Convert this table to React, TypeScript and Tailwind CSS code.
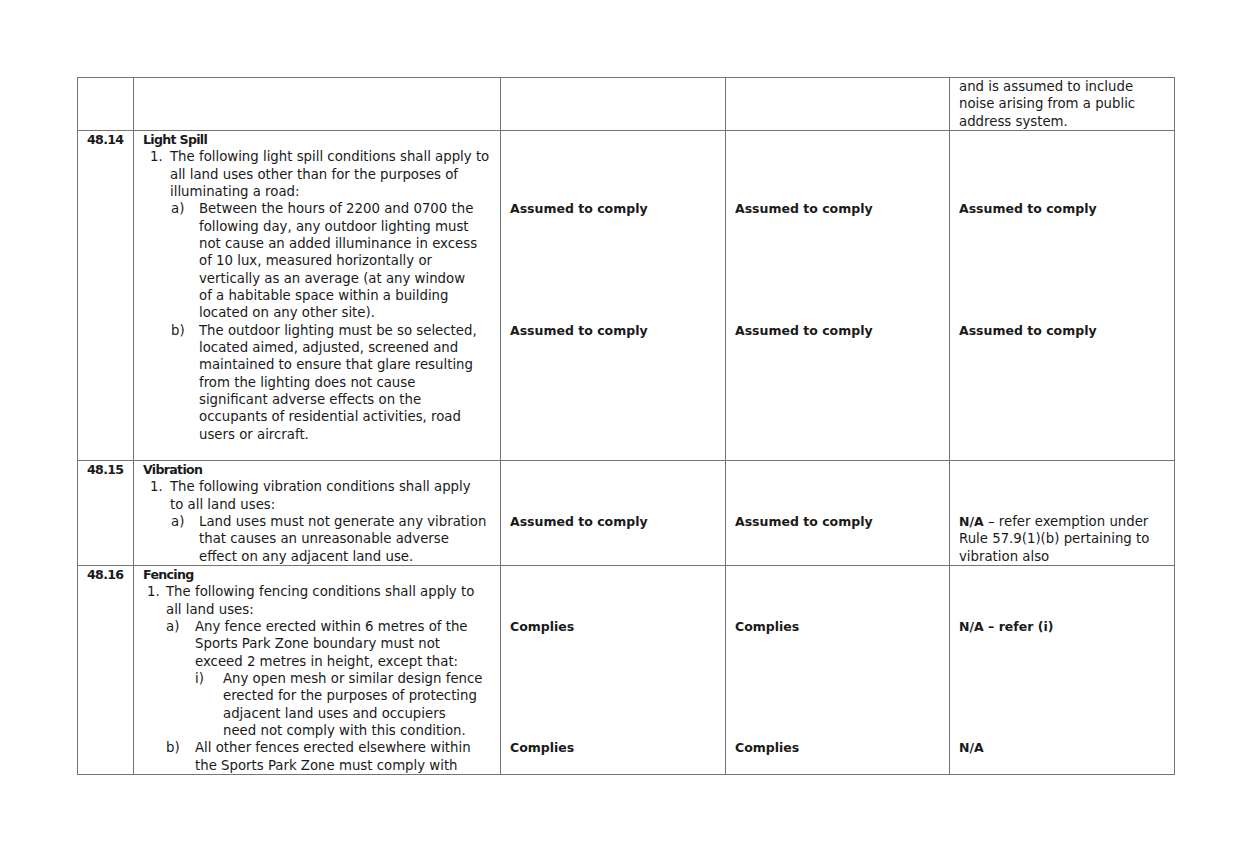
import React from "react";

type Kind = "r" | "b" | "h";
type Line = { ind?: string; mk?: string; mw?: string; text: React.ReactNode; k?: Kind };

const K: Record<Kind, string> = {
  r: "text-[13.3px]",
  b: "text-[12.5px] font-bold",
  h: "text-[12.6px] font-bold tracking-[-0.7px]",
};

const blank: Line = { text: "" };
const blanks = (n: number): Line[] => Array.from({ length: n }, () => blank);

// Row 1/2 list indents (relative to cell content left)
const n1 = (t: string): Line => ({ ind: "pl-[7px]", mk: "1.", mw: "w-[20px]", text: t });
const c1 = (t: string): Line => ({ ind: "pl-[27px]", text: t });
const na = (m: string, t: string): Line => ({ ind: "pl-[28px]", mk: m, mw: "w-[28px]", text: t });
const ca = (t: string): Line => ({ ind: "pl-[56px]", text: t });

// Row 3 list indents
const n3 = (t: string): Line => ({ ind: "pl-[4px]", mk: "1.", mw: "w-[19px]", text: t });
const c3 = (t: string): Line => ({ ind: "pl-[23px]", text: t });
const a3 = (m: string, t: string): Line => ({ ind: "pl-[23px]", mk: m, mw: "w-[29px]", text: t });
const d3 = (t: string): Line => ({ ind: "pl-[52px]", text: t });
const i3 = (m: string, t: string): Line => ({ ind: "pl-[52px]", mk: m, mw: "w-[28px]", text: t });
const e3 = (t: string): Line => ({ ind: "pl-[80px]", text: t });

const h = (t: string): Line => ({ text: t, k: "h" });
const b = (t: string): Line => ({ text: t, k: "b" });
const r = (t: string): Line => ({ text: t });

function Cell({ lines }: { lines: Line[] }) {
  return (
    <div className="border-l border-t border-[#747474] pl-[9px] overflow-hidden">
      {lines.map((l, i) => (
        <div
          key={i}
          className={`flex h-[17.33px] items-center whitespace-nowrap leading-[17.33px] ${l.ind ?? ""} ${K[l.k ?? "r"]}`}
        >
          {l.mk && <span className={l.mw}>{l.mk}</span>}
          <span>{l.text}</span>
        </div>
      ))}
    </div>
  );
}

const row1col2: Line[] = [
  h("Light Spill"),
  n1("The following light spill conditions shall apply to"),
  c1("all land uses other than for the purposes of"),
  c1("illuminating a road:"),
  na("a)", "Between the hours of 2200 and 0700 the"),
  ca("following day, any outdoor lighting must"),
  ca("not cause an added illuminance in excess"),
  ca("of 10 lux, measured horizontally or"),
  ca("vertically as an average (at any window"),
  ca("of a habitable space within a building"),
  ca("located on any other site)."),
  na("b)", "The outdoor lighting must be so selected,"),
  ca("located aimed, adjusted, screened and"),
  ca("maintained to ensure that glare resulting"),
  ca("from the lighting does not cause"),
  ca("significant adverse effects on the"),
  ca("occupants of residential activities, road"),
  ca("users or aircraft."),
];

const row1assumed: Line[] = [...blanks(4), b("Assumed to comply"), ...blanks(6), b("Assumed to comply")];

const row2col2: Line[] = [
  h("Vibration"),
  n1("The following vibration conditions shall apply"),
  c1("to all land uses:"),
  na("a)", "Land uses must not generate any vibration"),
  ca("that causes an unreasonable adverse"),
  ca("effect on any adjacent land use."),
];

const row2assumed: Line[] = [...blanks(3), b("Assumed to comply")];
const row2col5: Line[] = [
  ...blanks(3),
  {
    text: (
      <>
        <span className="text-[12.5px] font-bold">N/A</span> – refer exemption under
      </>
    ),
  },
  r("Rule 57.9(1)(b) pertaining to"),
  r("vibration also"),
];

const row3col2: Line[] = [
  h("Fencing"),
  n3("The following fencing conditions shall apply to"),
  c3("all land uses:"),
  a3("a)", "Any fence erected within 6 metres of the"),
  d3("Sports Park Zone boundary must not"),
  d3("exceed 2 metres in height, except that:"),
  i3("i)", "Any open mesh or similar design fence"),
  e3("erected for the purposes of protecting"),
  e3("adjacent land uses and occupiers"),
  e3("need not comply with this condition."),
  a3("b)", "All other fences erected elsewhere within"),
  d3("the Sports Park Zone must comply with"),
];

const row3complies: Line[] = [...blanks(3), b("Complies"), ...blanks(6), b("Complies")];
const row3col5: Line[] = [...blanks(3), b("N/A – refer (i)"), ...blanks(6), b("N/A")];

export default function App() {
  return (
    <div className="min-h-screen w-full bg-white pl-[77px] pt-[77px] text-[#1a1a1a] font-['DejaVu_Sans',sans-serif]">
      <div className="grid w-fit grid-cols-[56px_367px_225px_224px_225px] grid-rows-[53px_330px_105px_209px] border-r border-b border-[#747474]">
        {/* Row 0 (continuation) */}
        <Cell lines={[]} />
        <Cell lines={[]} />
        <Cell lines={[]} />
        <Cell lines={[]} />
        <Cell lines={[r("and is assumed to include"), r("noise arising from a public"), r("address system.")]} />

        {/* 48.14 */}
        <Cell lines={[h("48.14")]} />
        <Cell lines={row1col2} />
        <Cell lines={row1assumed} />
        <Cell lines={row1assumed} />
        <Cell lines={row1assumed} />

        {/* 48.15 */}
        <Cell lines={[h("48.15")]} />
        <Cell lines={row2col2} />
        <Cell lines={row2assumed} />
        <Cell lines={row2assumed} />
        <Cell lines={row2col5} />

        {/* 48.16 */}
        <Cell lines={[h("48.16")]} />
        <Cell lines={row3col2} />
        <Cell lines={row3complies} />
        <Cell lines={row3complies} />
        <Cell lines={row3col5} />
      </div>
    </div>
  );
}
